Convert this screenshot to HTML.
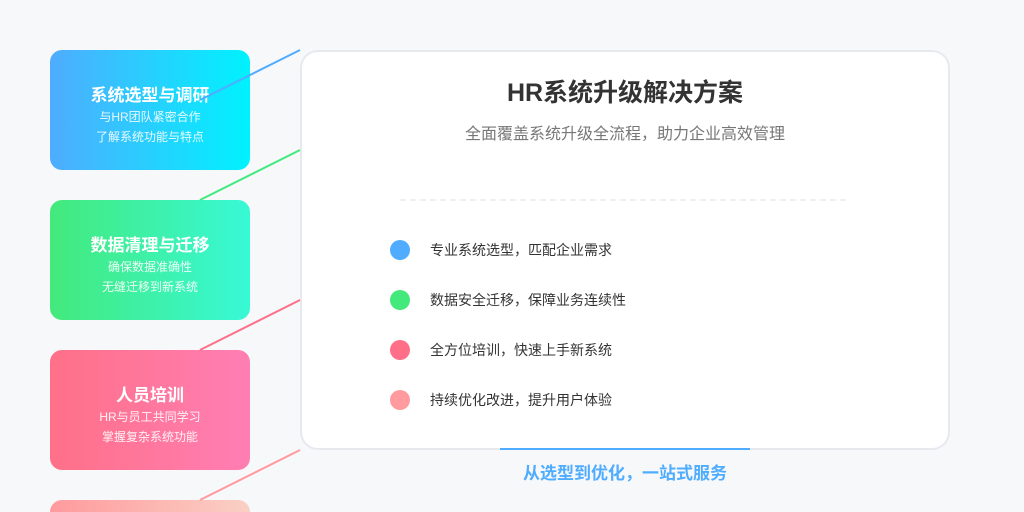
<!DOCTYPE html>
<html><head><meta charset="utf-8"><style>
*{margin:0;padding:0;box-sizing:border-box}
html,body{width:1024px;height:512px;overflow:hidden}
body{background:#f7f8fa;position:relative;font-family:"Liberation Sans","Noto Sans CJK SC",sans-serif}
.box{position:absolute;left:50px;width:200px;height:120px;border-radius:12px;color:#fff;text-align:center}
.box h3{font-size:17px;font-weight:bold;margin-top:35px;line-height:22px}
.box p{font-size:12px;line-height:20px;opacity:.9}
.card{position:absolute;left:300px;top:50px;width:650px;height:400px;background:#fff;border:2px solid #e8e9ee;border-radius:18px}
.t{position:absolute;left:0;width:100%;text-align:center}
.li{position:absolute;left:390px;font-size:14px;color:#333;line-height:20px}
.li i{position:absolute;left:0;top:0;width:20px;height:20px;border-radius:50%}
.li span{position:absolute;left:40px;white-space:nowrap}
</style></head><body>
<div class="box" style="top:50px;background:linear-gradient(90deg,#4facfe,#00f2fe)"><h3>系统选型与调研</h3><p>与HR团队紧密合作</p><p>了解系统功能与特点</p></div>
<div class="box" style="top:200px;background:linear-gradient(90deg,#43e97b,#38f9d7)"><h3>数据清理与迁移</h3><p>确保数据准确性</p><p>无缝迁移到新系统</p></div>
<div class="box" style="top:350px;background:linear-gradient(90deg,#ff7088,#ff7eb3)"><h3>人员培训</h3><p>HR与员工共同学习</p><p>掌握复杂系统功能</p></div>
<div class="box" style="top:500px;height:12px;border-radius:12px 12px 0 0;background:linear-gradient(90deg,#ff9a9e,#fad0c4)"></div>
<div class="card">
<div class="t" style="top:24px;font-size:25px;font-weight:bold;color:#333;line-height:34px">HR系统升级解决方案</div>
<div class="t" style="top:72px;font-size:16px;color:#777;line-height:22px">全面覆盖系统升级全流程，助力企业高效管理</div>
<div style="position:absolute;left:98px;top:147px;width:446px;border-top:2px dashed #f0f0f2"></div>
</div>
<div class="li" style="top:240px"><i style="background:#4facfe"></i><span>专业系统选型，匹配企业需求</span></div>
<div class="li" style="top:290px"><i style="background:#43e97b"></i><span>数据安全迁移，保障业务连续性</span></div>
<div class="li" style="top:340px"><i style="background:#ff7088"></i><span>全方位培训，快速上手新系统</span></div>
<div class="li" style="top:390px"><i style="background:#ff9a9e"></i><span>持续优化改进，提升用户体验</span></div>
<div style="position:absolute;left:500px;top:448px;width:250px;height:2px;background:#4facfe"></div>
<div style="position:absolute;left:475px;top:462px;width:300px;text-align:center;font-size:17px;font-weight:bold;color:#4facfe;line-height:24px">从选型到优化，一站式服务</div>
<svg width="1024" height="512" style="position:absolute;left:0;top:0">
<line x1="200" y1="100" x2="300" y2="50" stroke="#4facfe" stroke-width="2"/>
<line x1="200" y1="200" x2="300" y2="150" stroke="#43e97b" stroke-width="2"/>
<line x1="200" y1="350" x2="300" y2="300" stroke="#ff7088" stroke-width="2"/>
<line x1="200" y1="500" x2="300" y2="450" stroke="#ff9a9e" stroke-width="2"/>
</svg>
</body></html>
